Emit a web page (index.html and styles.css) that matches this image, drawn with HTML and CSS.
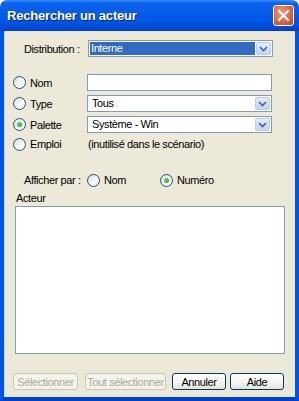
FILE: index.html
```html
<!DOCTYPE html>
<html lang="fr">
<head>
<meta charset="utf-8">
<link rel="stylesheet" href="styles.css">
</head>
<body>
<div class="window">
  <div class="titlebar">
    <span class="title">Rechercher un acteur</span>
    <span class="close"><svg width="13" height="13" viewBox="0 0 13 13"><path d="M2 2 L11 11 M11 2 L2 11" stroke="#fff" stroke-width="2.2" stroke-linecap="square"/></svg></span>
  </div>
  <div class="frame">
    <div class="dist-row">
      <span class="dist-label">Distribution :</span>
      <div class="combo wide">
        <span class="combo-text selected">Interne</span>
        <span class="drop"><svg width="9" height="6" viewBox="0 0 9 6"><path d="M1 1 L4.5 4.5 L8 1" fill="none" stroke="#4d6185" stroke-width="1.6"/></svg></span>
      </div>
    </div>
    <div class="opts">
      <label class="radio"><span class="dot"></span>Nom</label>
      <div class="textbox"></div>
      <label class="radio"><span class="dot"></span>Type</label>
      <div class="combo">
        <span class="combo-text">Tous</span>
        <span class="drop"><svg width="9" height="6" viewBox="0 0 9 6"><path d="M1 1 L4.5 4.5 L8 1" fill="none" stroke="#4d6185" stroke-width="1.6"/></svg></span>
      </div>
      <label class="radio"><span class="dot on"></span>Palette</label>
      <div class="combo">
        <span class="combo-text">Système - Win</span>
        <span class="drop"><svg width="9" height="6" viewBox="0 0 9 6"><path d="M1 1 L4.5 4.5 L8 1" fill="none" stroke="#4d6185" stroke-width="1.6"/></svg></span>
      </div>
      <label class="radio"><span class="dot"></span>Emploi</label>
      <span class="note">(inutilisé dans le scénario)</span>
    </div>
    <div class="show-row">
      <span class="show-label">Afficher par :</span>
      <label class="radio first"><span class="dot"></span>Nom</label>
      <label class="radio"><span class="dot on"></span>Numéro</label>
    </div>
    <div class="list-label">Acteur</div>
    <div class="listbox"></div>
    <div class="buttons">
      <button class="btn disabled b1">Sélectionner</button>
      <button class="btn disabled b2">Tout sélectionner</button>
      <button class="btn b3">Annuler</button>
      <button class="btn b4">Aide</button>
    </div>
  </div>
</div>
</body>
</html>
```
FILE: styles.css
```css
* { box-sizing: border-box; }
html, body { margin: 0; padding: 0; background: #fff; }
body { font-family: "Liberation Sans", "DejaVu Sans", sans-serif; font-size: 11px; letter-spacing: -0.4px; color: #000; }
.window { width: 299px; height: 401px; display: flex; flex-direction: column; }
.titlebar {
  height: 31px; flex: none;
  border-radius: 7px 7px 0 0;
  background: linear-gradient(to bottom, #3a8cff 0px, #0a64f0 3px, #0a5fec 8px, #0058e6 20px, #004ad8 28px, #003fc4 31px);
  display: flex; align-items: center; justify-content: space-between;
  padding: 0 5px 0 7px;
}
.title { color: #fff; font-weight: bold; font-size: 13px; letter-spacing: -0.2px; text-shadow: 1px 1px 0 #0a1e80; }
.close {
  width: 21px; height: 21px; border: 1px solid #fff; border-radius: 3px;
  background: radial-gradient(circle at 40% 35%, #f29a7a 0%, #e0643e 55%, #c24018 100%);
  display: flex; align-items: center; justify-content: center;
}
.frame {
  flex: 1; background: #ece9d8;
  border-left: 4px solid #0055e5; border-right: 4px solid #0055e5; border-bottom: 4px solid #0041cc;
  box-shadow: inset 1px 0 0 #c9d6f4;
  display: flex; flex-direction: column;
}
.dist-row { display: flex; align-items: center; margin-top: 9px; padding-left: 20px; height: 17px; }
.dist-label { width: 64px; }
.combo { height: 17px; border: 1px solid #7f9db9; background: #fff; display: flex; align-items: center; padding: 1px; }
.combo.wide { width: 185px; }
.combo-text { flex: 1; height: 13px; line-height: 13px; padding-left: 3px; }
.combo-text.selected { background: #316ac5; color: #fff; margin-right: 1px; padding-left: 1px; }
.drop {
  width: 15px; height: 13px; border-radius: 2px;
  background: linear-gradient(to bottom, #e3ecfe, #c1d3fb);
  border: 1px solid #b9cbf3;
  display: flex; align-items: center; justify-content: center;
}
.opts {
  display: grid; grid-template-columns: 74px 185px; grid-template-rows: 17px 17px 17px 14px;
  row-gap: 4px; margin-top: 17px; padding-left: 9px; align-items: center;
}
.textbox { height: 17px; border: 1px solid #7f9db9; background: #fff; }
.radio { display: flex; align-items: center; gap: 4px; }
.dot {
  width: 13px; height: 13px; border-radius: 50%; border: 1px solid #1c5180;
  background: linear-gradient(135deg, #dcdcd7, #ffffff 70%);
  display: flex; align-items: center; justify-content: center; flex: none;
}
.dot.on::after { content: ""; width: 5px; height: 5px; border-radius: 50%; background: radial-gradient(circle at 35% 35%, #5fd45f, #21a121); }
.note { padding-left: 1px; }
.show-row { display: flex; align-items: center; height: 16px; margin-top: 21px; padding-left: 20px; }
.show-label { width: 63px; }
.show-row .radio.first { width: 73px; }
.list-label { margin-top: 4px; padding-left: 12px; height: 13px; line-height: 13px; }
.listbox { margin: 1px 0 0 11px; width: 270px; height: 148px; background: #fff; border: 1px solid #7f9db9; }
.buttons { display: flex; margin-top: 19px; padding-left: 9px; }
.btn {
  height: 17px; font: inherit; font-size: 11px; padding: 0; white-space: nowrap; letter-spacing: -0.4px;
  border: 1px solid #003c74; border-radius: 3px;
  background: linear-gradient(to bottom, #ffffff, #f4f3ee 60%, #e3e2da);
  color: #000;
}
.btn.disabled { border-color: #c9c7ba; background: #f5f4ea; color: #aca899; }
.b1 { width: 65px; }
.b2 { width: 81px; margin-left: 7px; }
.b3 { width: 54px; margin-left: 6px; }
.b4 { width: 54px; margin-left: 4px; }
```
